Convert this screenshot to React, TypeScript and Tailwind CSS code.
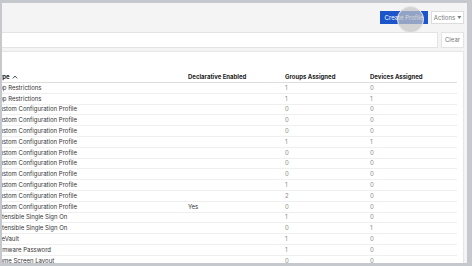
import React from "react";

const rows: [string, string, string, string][] = [
  ["App Restrictions", "", "1", "0"],
  ["App Restrictions", "", "1", "1"],
  ["Custom Configuration Profile", "", "0", "0"],
  ["Custom Configuration Profile", "", "0", "0"],
  ["Custom Configuration Profile", "", "0", "0"],
  ["Custom Configuration Profile", "", "1", "1"],
  ["Custom Configuration Profile", "", "0", "0"],
  ["Custom Configuration Profile", "", "0", "0"],
  ["Custom Configuration Profile", "", "0", "0"],
  ["Custom Configuration Profile", "", "1", "0"],
  ["Custom Configuration Profile", "", "2", "0"],
  ["Custom Configuration Profile", "Yes", "0", "0"],
  ["Extensible Single Sign On", "", "1", "0"],
  ["Extensible Single Sign On", "", "0", "1"],
  ["FileVault", "", "1", "0"],
  ["Firmware Password", "", "1", "0"],
  ["Home Screen Layout", "", "0", "0"],
];

export default function App() {
  return (
    <div
      className="w-[472px] h-[266px] bg-[#c5c9cd] pt-[3px] pl-[2px] pr-[5px] pb-[3px] overflow-hidden"
      style={{ fontFamily: "Inter, 'Liberation Sans', sans-serif" }}
    >
      <div className="relative h-full bg-[#f4f4f4] flex flex-col overflow-hidden">
        <div className="h-[28px] shrink-0 flex items-center justify-end gap-[3px] pr-[3px] pt-[1px]">
          <button className="h-[13px] w-[48px] bg-[#1c55c9] text-white text-[6px] leading-none flex items-center justify-center">
            Create Profile
          </button>
          <button className="h-[13px] w-[33px] bg-white border border-[#dcdcdc] text-[#777] text-[6px] leading-none flex items-center justify-center gap-[2px]">
            Actions <span className="text-[4px]">▼</span>
          </button>
        </div>
        <div className="h-[16px] shrink-0 flex gap-[3px] pr-[3px] mt-[1px]">
          <div className="flex-1 -ml-[2px] bg-white border border-[#e3e3e3]" />
          <button className="w-[23px] bg-white border border-[#e3e3e3] text-[#777] text-[6px] leading-none flex items-center justify-center">
            Clear
          </button>
        </div>
        <div className="flex-1 mt-[3px] mr-[3px] bg-white border-t border-r border-[#e6e6e6] overflow-hidden">
          <div className="-ml-[7px] w-[462px] pt-[20px]">
            <div className="grid grid-cols-[193px_97px_85px_87px] h-[11px] items-center border-b border-[#dedede] text-[6px] font-bold text-[#222] leading-none">
              <div className="flex items-center gap-[2px]">
                Type
                <svg width="6" height="4" viewBox="0 0 6 4" className="mt-[-1px]">
                  <path d="M0.8 3.4 L3 1 L5.2 3.4" fill="none" stroke="#444" strokeWidth="0.9" />
                </svg>
              </div>
              <div>Declarative Enabled</div>
              <div>Groups Assigned</div>
              <div>Devices Assigned</div>
            </div>
            {rows.map((r, i) => (
              <div
                key={i}
                className="grid grid-cols-[193px_97px_85px_87px] h-[10.8px] items-center border-b border-[#efefef] text-[6px] leading-none"
              >
                <div className="text-[#333]">{r[0]}</div>
                <div className="text-[#333]">{r[1]}</div>
                <div className="text-[#8a8a8a]">{r[2]}</div>
                <div className="text-[#8a8a8a]">{r[3]}</div>
              </div>
            ))}
          </div>
        </div>
        <div className="absolute left-[395px] top-[3px] w-[27px] h-[27px] rounded-full bg-[#c4c4c4]/70 border border-[#e8e8e8]" />
      </div>
    </div>
  );
}
